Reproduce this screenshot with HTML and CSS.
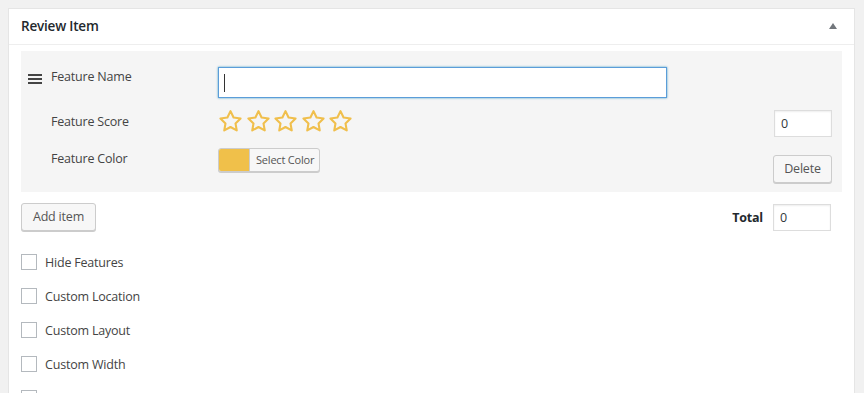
FILE: index.html
```html
<!DOCTYPE html>
<html>
<head>
<meta charset="utf-8">
<title>Review Item</title>
<link rel="stylesheet" href="styles.css">
</head>
<body>

<!-- REVIEW ITEM BOX -->
<div class="postbox">
  <div class="hndle">
    <span class="title">Review Item</span>
    <span class="toggle"></span>
  </div>

  <div class="inside">

    <!-- FEATURE ROW -->
    <div class="feature">
      <div class="row row-name">
        <span class="drag"><i></i><i></i><i></i></span>
        <span class="label">Feature Name</span>
        <input class="name-input" type="text" value="">
      </div>

      <div class="row row-score">
        <span class="label">Feature Score</span>
        <span class="stars">
          <svg viewBox="0 0 26 25" class="star"><path d="M13 2.2l3.2 6.7 7.3 1-5.3 5.1 1.3 7.3L13 18.8l-6.5 3.5 1.3-7.3L2.5 9.9l7.3-1z"/></svg>
          <svg viewBox="0 0 26 25" class="star"><path d="M13 2.2l3.2 6.7 7.3 1-5.3 5.1 1.3 7.3L13 18.8l-6.5 3.5 1.3-7.3L2.5 9.9l7.3-1z"/></svg>
          <svg viewBox="0 0 26 25" class="star"><path d="M13 2.2l3.2 6.7 7.3 1-5.3 5.1 1.3 7.3L13 18.8l-6.5 3.5 1.3-7.3L2.5 9.9l7.3-1z"/></svg>
          <svg viewBox="0 0 26 25" class="star"><path d="M13 2.2l3.2 6.7 7.3 1-5.3 5.1 1.3 7.3L13 18.8l-6.5 3.5 1.3-7.3L2.5 9.9l7.3-1z"/></svg>
          <svg viewBox="0 0 26 25" class="star"><path d="M13 2.2l3.2 6.7 7.3 1-5.3 5.1 1.3 7.3L13 18.8l-6.5 3.5 1.3-7.3L2.5 9.9l7.3-1z"/></svg>
        </span>
        <input class="small-input score-input" type="text" value="0">
      </div>

      <div class="row row-color">
        <span class="label">Feature Color</span>
        <span class="color-btn"><span class="swatch"></span><span class="color-text">Select Color</span></span>
        <span class="button delete-btn">Delete</span>
      </div>
    </div>
    <!-- END FEATURE ROW -->

    <div class="footer">
      <span class="button add-btn">Add item</span>
      <b class="total">Total</b>
      <input class="small-input" type="text" value="0">
    </div>

    <div class="checks">
      <label class="check"><span class="box"></span>Hide Features</label>
      <label class="check"><span class="box"></span>Custom Location</label>
      <label class="check"><span class="box"></span>Custom Layout</label>
      <label class="check"><span class="box"></span>Custom Width</label>
      <label class="check"><span class="box"></span>Custom Content</label>
    </div>

  </div>
</div>
<!-- END REVIEW ITEM BOX -->

</body>
</html>
```

FILE: styles.css
```css
body { margin: 0; background: #f1f1f1; font-family: "Open Sans", "Noto Sans", sans-serif; font-size: 12.5px; letter-spacing: -0.2px; color: #32373c; overflow: hidden }

.postbox { margin: 8px 9px 0 8px; background: #fff; border: 1px solid #e5e5e5; height: 400px }
.hndle { height: 35px; border-bottom: 1px solid #eee; display: flex; align-items: center; padding: 0 12px }
.title { font-size: 13.5px; font-weight: 600; color: #23282d; flex: 1; margin-top: -1px }
.toggle { width: 0; height: 0; border-left: 4px solid transparent; border-right: 4px solid transparent; border-bottom: 6px solid #72777c; margin-right: 5px; margin-top: -1px }

.inside { padding: 6px 12px 0 12px }

.feature { background: #f5f5f5; padding: 16px 10px 9px 7px }
.row { display: flex; align-items: center; padding-left: 23px }
.row-name { padding-left: 0; height: 31px; align-items: flex-start }
.drag { width: 14px; margin-right: 9px; margin-top: 7px; display: flex; flex-direction: column; gap: 2px }
.drag i { display: block; height: 2px; background: #444 }
.row-name .label { margin-top: 1px }
.label { width: 167px; color: #444; flex: none }
.name-input { width: 449px; height: 31px; box-sizing: border-box; border: 1px solid #5b9dd9; box-shadow: 0 0 2px rgba(30,140,190,.8); outline: none; margin: 0; padding: 0 6px; font: inherit; background: #fff linear-gradient(#333, #333) no-repeat 5px 6px / 1px 18px }

.row-score { height: 28px; margin-top: 11px; align-items: flex-start }
.row-score .label { margin-top: 4px }
.stars { display: flex; gap: 2.5px }
.star { width: 25px; height: 24px; fill: none; stroke: #f0bf4c; stroke-width: 2.2; stroke-linejoin: round }
.small-input { width: 58px; height: 27px; box-sizing: border-box; border: 1px solid #ddd; box-shadow: inset 0 1px 2px rgba(0,0,0,.07); margin: 0; padding: 0 6px; font: inherit; color: #32373c; background: #fff }
.score-input { margin-left: auto; margin-top: 1px }

.row-color { height: 35px; margin-top: 11px; align-items: flex-start }
.row-color .label { margin-top: 2px }
.color-btn { display: flex; height: 24px; box-sizing: border-box; border: 1px solid #ccc; border-radius: 3px; box-shadow: 0 1px 0 #ccc; background: #f7f7f7; overflow: hidden }
.swatch { width: 30px; background: #f0c04a; border-right: 1px solid #ccc }
.color-text { font-size: 11px; color: #555; padding: 0 5px 0 6px; line-height: 21px }

.button { display: inline-block; box-sizing: border-box; height: 28px; line-height: 26px; padding: 0 10px; border: 1px solid #ccc; border-radius: 3px; background: #f7f7f7; box-shadow: 0 1px 0 #ccc; color: #555; white-space: nowrap }
.delete-btn { margin-left: auto; margin-top: 7px; width: 59px; text-align: center; padding: 0 }

.footer { display: flex; align-items: center; margin-top: 11px; padding-right: 11px }
.add-btn { width: 75px; text-align: center; padding: 0 }
.total { margin-left: auto; margin-right: 10px; color: #23282d; font-weight: 700 }
.footer .small-input { height: 27px }

.checks { margin-top: 23px }
.check { display: flex; align-items: center; height: 16px; margin-bottom: 18px; color: #444 }
.box { width: 16px; height: 16px; box-sizing: border-box; border: 1px solid #b4b9be; background: #fff; margin-right: 8px }
```
